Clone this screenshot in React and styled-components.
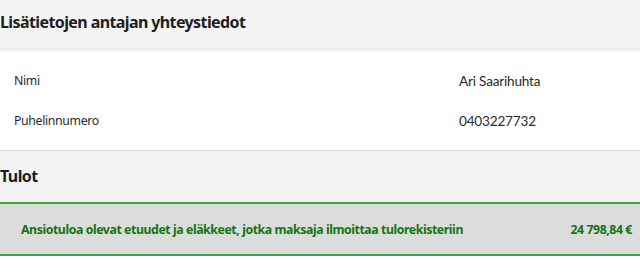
import React from 'react';
import styled, { createGlobalStyle } from 'styled-components';

const GlobalStyle = createGlobalStyle`
	body {
		margin: 0;
		background: #ffffff;
		font-family: "Noto Sans", "Open Sans", sans-serif;
		color: #222;
	}
`;

const contact = [
	{ label: 'Nimi', value: 'Ari Saarihuhta' },
	{ label: 'Puhelinnumero', value: '0403227732' },
];

function App() {
	return (
		<>
			<GlobalStyle />
			<Page>
				<SectionHeader>
					<HeaderTitle>Lisätietojen antajan yhteystiedot</HeaderTitle>
				</SectionHeader>
				<HeaderShade />
				<ContactList>
					{contact.map((row) => (
						<ContactRow key={row.label}>
							<ContactLabel>{row.label}</ContactLabel>
							<ContactValue>{row.value}</ContactValue>
						</ContactRow>
					))}
				</ContactList>
				<SectionHeader $tall>
					<HeaderTitle>Tulot</HeaderTitle>
				</SectionHeader>
				<IncomeRow>
					<IncomeText>Ansiotuloa olevat etuudet ja eläkkeet, jotka maksaja ilmoittaa tulorekisteriin</IncomeText>
					<IncomeText>24 798,84 €</IncomeText>
				</IncomeRow>
			</Page>
		</>
	);
}

const Page = styled.div`
	width: 640px;
	display: flex;
	flex-direction: column;
`;

const SectionHeader = styled.div`
	height: ${(p) => (p.$tall ? '52px' : '48px')};
	background-color: #f3f3f3;
	display: flex;
	align-items: center;
	padding-bottom: ${(p) => (p.$tall ? '2px' : '4px')};
	box-sizing: border-box;
	border-top: ${(p) => (p.$tall ? '1px solid #dcdcdc' : 'none')};
`;

const HeaderTitle = styled.h2`
	margin: 0;
	font-size: 16px;
	font-weight: 700;
	letter-spacing: -0.6px;
	color: #1e1e1e;
`;

const HeaderShade = styled.div`
	height: 4px;
	background: linear-gradient(#e4ede7, #f6faf7);
`;

const ContactList = styled.div`
	display: flex;
	flex-direction: column;
	padding: 8px 0 10px;
`;

const ContactRow = styled.div`
	height: 40px;
	display: grid;
	grid-template-columns: 445px 1fr;
	align-items: center;
	padding-left: 14px;
`;

const ContactLabel = styled.span`
	font-size: 12.3px;
	letter-spacing: -0.35px;
	color: #2a2a2a;
`;

const ContactValue = styled.span`
	font-family: Lato, "Noto Sans", sans-serif;
	font-size: 13.6px;
	letter-spacing: -0.2px;
	color: #2a2a2a;
	padding-top: 2px;
`;

const IncomeRow = styled.div`
	height: 54px;
	box-sizing: border-box;
	background-color: #dcdcdc;
	border-top: 2px solid #3aa53a;
	border-bottom: 2px solid #3aa53a;
	display: flex;
	justify-content: space-between;
	align-items: center;
	padding: 0 8px 0 21px;
`;

const IncomeText = styled.span`
	font-size: 12.3px;
	font-weight: 700;
	letter-spacing: -0.42px;
	color: #127512;
`;

export default App;
